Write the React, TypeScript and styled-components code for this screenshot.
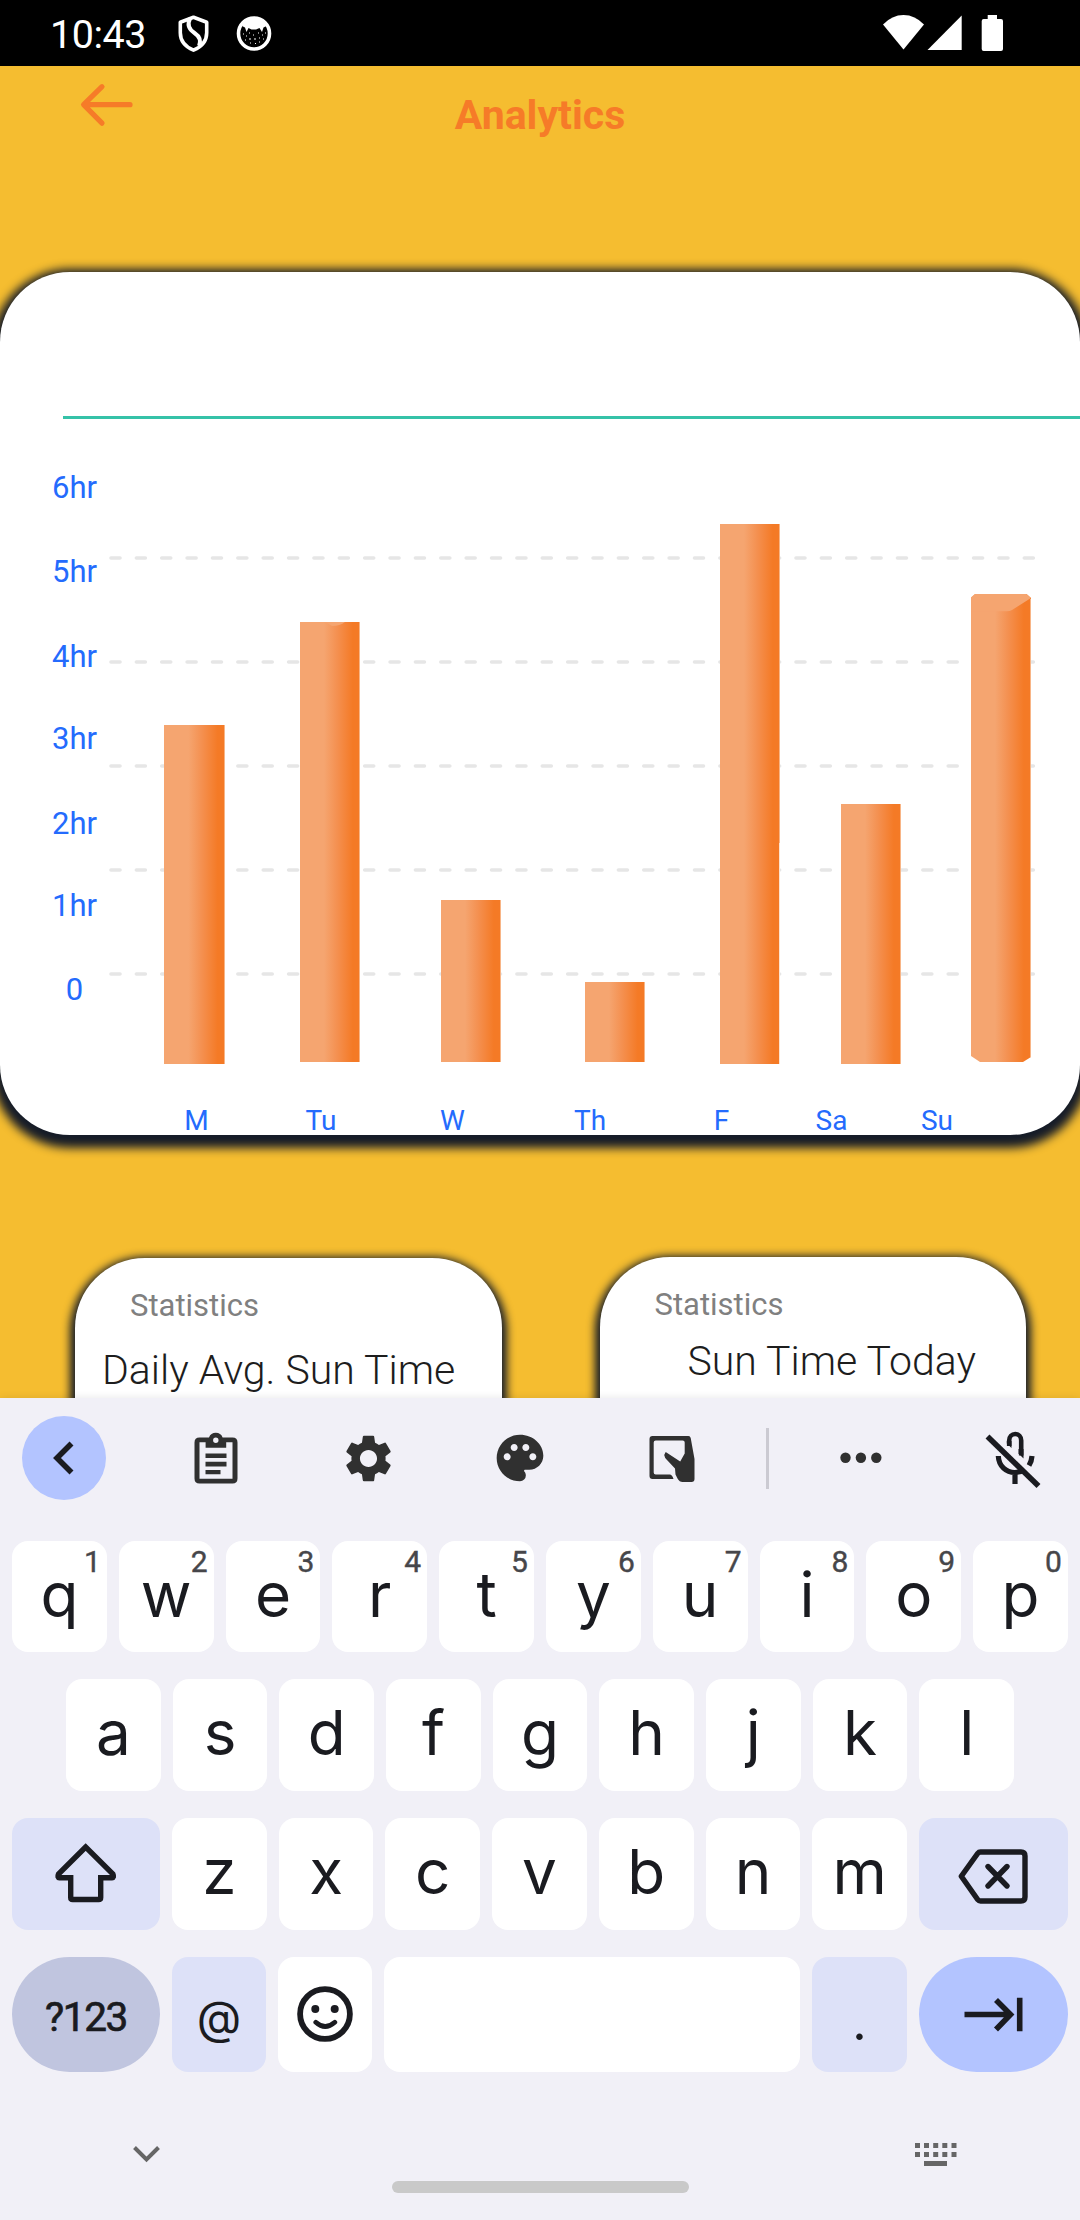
import React from "react";
import styled, { createGlobalStyle } from "styled-components";
import { MdSettings, MdPalette } from "react-icons/md";

const GlobalStyle = createGlobalStyle`
  * { box-sizing: border-box; }
  body { margin: 0; background: #f5bd30; }
`;

const INK = "#1a1b20";
const TOOL = "#303030";

const Screen = styled.div`
  width: 1080px;
  height: 2220px;
  display: flex;
  flex-direction: column;
  overflow: hidden;
  background: #f5bd30;
  font-family: Roboto, "Liberation Sans", sans-serif;
`;

const StatusBar = styled.header`
  height: 66px;
  flex: none;
  background: #000;
  color: #fff;
  display: flex;
  align-items: flex-start;
  padding: 14px 75px 0 50px;
`;

const Clock = styled.span`
  width: 126px;
  padding-top: 1px;
  font-size: 39.5px;
  line-height: 40px;
  letter-spacing: -0.5px;
`;

const StatusIcons = styled.div`
  display: flex;
  flex: 1;
  justify-content: space-between;
`;

const Glyph = styled.svg`
  display: block;
  flex: none;
`;

const Content = styled.main`
  height: 1332px;
  flex: none;
  overflow: hidden;
`;

const TopBar = styled.div`
  height: 206px;
  display: grid;
  grid-template-columns: 200px 1fr 200px;
  align-items: start;
`;

const BackButton = styled.div`
  padding: 14px 0 0 76px;
`;

const Title = styled.h1`
  margin: 0;
  padding-top: 25px;
  text-align: center;
  font-size: 41px;
  line-height: 48px;
  font-weight: 700;
  color: #f67b28;
`;

const shadowColor = "#161c28";

const ChartCard = styled.section`
  height: 863px;
  padding-top: 144px;
  background: #fff;
  border-radius: 70px;
  box-shadow: 0 5px 10px 8px ${shadowColor};
`;

const Rule = styled.div`
  height: 3px;
  margin-left: 63px;
  background: #35c2a8;
`;

const ChartBody = styled.div`
  display: flex;
  height: 651px;
`;

const HourAxis = styled.div`
  width: 104px;
  padding: 49px 0 0 45px;
  flex: none;
`;

const Hour = styled.div<{ $step: number }>`
  width: 59px;
  height: ${(p) => p.$step}px;
  text-align: center;
  font-size: 31px;
  line-height: 40px;
  color: #246bfd;
`;

const Plot = styled(Glyph)`
  margin-top: 81px;
`;

const DayAxis = styled.div`
  display: flex;
  margin: 35px 0 0 136px;
`;

const Day = styled.span<{ $w: number }>`
  width: ${(p) => p.$w}px;
  text-align: center;
  font-size: 28px;
  line-height: 32px;
  color: #246bfd;
`;

const StatRow = styled.div`
  display: flex;
  justify-content: space-between;
  align-items: flex-start;
  padding: 123px 54px 0 75px;
`;

const StatCard = styled.section<{ $lift: number; $pad: number }>`
  width: 426.5px;
  height: 300px;
  margin-top: ${(p) => -p.$lift}px;
  padding: ${(p) => p.$pad}px 0 0 55px;
  background: #fff;
  border-radius: 70px;
  box-shadow: 0 4px 8px 5px ${shadowColor};
`;

const StatLabel = styled.div`
  font-size: 31px;
  line-height: 40px;
  color: #808080;
`;

const StatTitle = styled.div<{ $x: number; $top: number }>`
  margin: ${(p) => p.$top}px 0 0 ${(p) => p.$x}px;
  font-size: 41px;
  line-height: 48px;
  font-weight: 300;
  color: #1d1d1d;
  white-space: nowrap;
`;

const Keyboard = styled.section`
  position: relative;
  flex: 1;
  background: #f1f0f7;
  box-shadow: 0 0 8px rgba(0, 0, 0, 0.1);
  font-family: Inter, "Liberation Sans", sans-serif;
  color: ${INK};
`;

const Toolbar = styled.div`
  height: 143px;
  padding: 18px 0 41px 22px;
  display: flex;
  align-items: center;
`;

const RoundButton = styled.div`
  width: 84px;
  height: 84px;
  margin-right: 34px;
  border-radius: 42px;
  background: #b3c4ff;
  display: flex;
  align-items: center;
  justify-content: center;
`;

const ToolSlot = styled.div<{ $w?: number }>`
  width: ${(p) => p.$w ?? 152}px;
  color: ${TOOL};
  display: flex;
  align-items: center;
  justify-content: center;
`;

const Divider = styled.div`
  width: 3px;
  height: 61px;
  margin: 0 16.4px 0 18px;
  background: #cbcad2;
`;

const KeyRow = styled.div<{ $inset?: number; $h?: number }>`
  display: flex;
  gap: 12px;
  height: ${(p) => p.$h ?? 112}px;
  margin: 0 ${(p) => p.$inset ?? 12}px 27px;
`;

type Tone = "plain" | "soft" | "mode" | "accent";
const tones: Record<Tone, string> = {
  plain: "#ffffff",
  soft: "#dde1f8",
  mode: "#c0c5df",
  accent: "#b3c4ff",
};

const Key = styled.div<{ $tone?: Tone; $w?: number; $round?: boolean }>`
  position: relative;
  flex: ${(p) => (p.$w ? `0 0 ${p.$w}px` : "1 1 0")};
  min-width: 0;
  border-radius: ${(p) => (p.$round ? 58 : 16)}px;
  background: ${(p) => tones[p.$tone ?? "plain"]};
  display: flex;
  align-items: center;
  justify-content: center;
`;

const Letter = styled.span`
  padding-bottom: 4px;
  font-size: 62px;
  line-height: 74px;
`;

const Hint = styled.span`
  position: absolute;
  top: 3px;
  right: 6px;
  font-family: Roboto, "Liberation Sans", sans-serif;
  font-size: 30px;
  line-height: 36px;
  color: #46464a;
  -webkit-text-stroke: 0.4px #46464a;
`;

const KeyText = styled.span<{ $size: number; $top: number }>`
  padding-top: ${(p) => p.$top}px;
  font-size: ${(p) => p.$size}px;
  line-height: 48px;
`;

const ModeText = styled(KeyText)`
  font-family: Roboto, "Liberation Sans", sans-serif;
  letter-spacing: -1.4px;
  -webkit-text-stroke: 0.7px ${INK};
`;

const SystemRow = styled.div`
  height: 148px;
  display: grid;
  grid-template-columns: 1fr 297px 1fr;
  margin-top: -27px;
`;

const NavPill = styled.div`
  height: 12px;
  margin-top: 109px;
  border-radius: 6px;
  background: #c9c9c9;
`;

const NavIcon = styled.div<{ $left: number; $top: number }>`
  padding: ${(p) => p.$top}px 0 0 ${(p) => p.$left}px;
`;

const hours = [
  { label: "6hr", step: 84 },
  { label: "5hr", step: 85 },
  { label: "4hr", step: 82 },
  { label: "3hr", step: 85 },
  { label: "2hr", step: 82 },
  { label: "1hr", step: 84 },
  { label: "0", step: 40 },
];

const days = [
  { label: "M", w: 121 },
  { label: "Tu", w: 128 },
  { label: "W", w: 135 },
  { label: "Th", w: 140 },
  { label: "F", w: 123 },
  { label: "Sa", w: 97 },
  { label: "Su", w: 114 },
];

const bars = [
  { x: 164, w: 61, top: 725, end: 1064 },
  { x: 300, w: 60, top: 622, end: 1062 },
  { x: 441, w: 60, top: 900, end: 1062 },
  { x: 585, w: 60, top: 982, end: 1062 },
  { x: 720, w: 60, top: 524, end: 1064 },
  { x: 841, w: 60, top: 804, end: 1064 },
];

const gridLines = [558, 662, 766, 870, 974];

function ChartPlot() {
  return (
    <Plot width="940" height="570" viewBox="104 500 940 570">
      <defs>
        <linearGradient id="bar" x1="0" x2="1" y1="0" y2="0">
          <stop offset="0" stopColor="#f5a570" />
          <stop offset="0.4" stopColor="#f5a570" />
          <stop offset="0.62" stopColor="#f49050" />
          <stop offset="0.88" stopColor="#f47a26" />
          <stop offset="1" stopColor="#f47a26" />
        </linearGradient>
      </defs>
      {gridLines.map((y) => (
        <line key={y} x1="111" x2="1034.5" y1={y} y2={y} stroke="#e6e6e6" strokeWidth="3.6" strokeLinecap="round" strokeDasharray="9 16.37" />
      ))}
      {bars.map((b) => (
        <g key={b.x}>
          <rect x={b.x} y={b.top} width={b.w} height={b.end - b.top} fill="url(#bar)" />
          <rect x={b.x + b.w - 1} y={b.top} width="1" height={b.end - b.top} fill="#f8b586" />
        </g>
      ))}
      <path d="M325 622h20q-5 4-13 4z" fill="#f5a570" />
      <rect x="779" y="843" width="1" height="221" fill="#fde3d0" />
      <path d="M971 597.5l4-3.500h51.500l4.500 4V1057l-8 5h-43l-9-6z" fill="url(#bar)" />
      <path d="M971 597.500l4-3.500h51.500l4.500 4-19 12q-2 1.300-5 1.300h-36z" fill="#f5a570" />
      <rect x="1030" y="599" width="1" height="458" fill="#f8b586" />
    </Plot>
  );
}

const row1 = ["q", "w", "e", "r", "t", "y", "u", "i", "o", "p"];
const row2 = ["a", "s", "d", "f", "g", "h", "j", "k", "l"];
const row3 = ["z", "x", "c", "v", "b", "n", "m"];

export default function App() {
  return (
    <Screen>
      <GlobalStyle />
      <StatusBar>
        <Clock>10:43</Clock>
        <StatusIcons>
          <Glyph width="100" height="40" viewBox="176 14 100 40" fill="none" stroke="#fff">
            <path d="M193.500 17.200l13.200 5v10.500c0 7.500-5 14-13.200 17.500-8.200-3.500-13.200-10-13.200-17.500V22.200z" strokeWidth="3.600" strokeLinejoin="round" />
            <path d="M190 18.500c-3 6-1.500 10.500 4.500 14.500 5.500 3.700 7 7.500 4.500 13" strokeWidth="4" />
            <circle cx="254" cy="33.500" r="15.500" strokeWidth="3.600" />
            <path d="M242 26C245 20 249 17.500 254 17.500S263 20 266.500 26L263.500 27.500 262 32 259.500 28 256 29.500h-4.500L248.500 28 246.500 32 245 27.500z" fill="#fff" stroke="none" />
            <path d="M243 34h1M246 36h1M249 33h1M253 35h1M258 33h1M262 35h1M265 33h1M245 40h1M249 39h2M254 39h2M259 38h1M263 39h1M250 43h1M255 43.500h1M259 42h1" strokeWidth="1.200" />
          </Glyph>
          <Glyph width="125" height="40" viewBox="880 14 125 40" fill="#fff">
            <path d="M903.500 49.500L883 24.500Q892 15 903.500 15T924 24.500z" />
            <path d="M961.700 15.500V50H927.500z" />
            <path d="M987.700 15h9.300v4h4q2 0 2 2v28q0 2-2 2h-17.300q-2 0-2-2V21q0-2 2-2h4z" />
          </Glyph>
        </StatusIcons>
      </StatusBar>

      <Content>
        <TopBar>
          <BackButton>
            <Glyph width="60" height="50" viewBox="76 80 60 50" fill="none" stroke="#f67b28" strokeWidth="5.200" strokeLinecap="round" strokeLinejoin="round">
              <path d="M130 104.700H84M102 86.700L83.600 104.700 102 123.200" />
            </Glyph>
          </BackButton>
          <Title>Analytics</Title>
        </TopBar>

        <ChartCard>
          <Rule />
          <ChartBody>
            <HourAxis>
              {hours.map((h) => (
                <Hour key={h.label} $step={h.step}>{h.label}</Hour>
              ))}
            </HourAxis>
            <ChartPlot />
          </ChartBody>
          <DayAxis>
            {days.map((d) => (
              <Day key={d.label} $w={d.w}>{d.label}</Day>
            ))}
          </DayAxis>
        </ChartCard>

        <StatRow>
          <StatCard $lift={0} $pad={28}>
            <StatLabel>Statistics</StatLabel>
            <StatTitle $x={-28} $top={20}>Daily Avg. Sun Time</StatTitle>
          </StatCard>
          <StatCard $lift={1} $pad={28}>
            <StatLabel>Statistics</StatLabel>
            <StatTitle $x={33} $top={12}>Sun Time Today</StatTitle>
          </StatCard>
        </StatRow>
      </Content>

      <Keyboard>
        <Toolbar>
          <RoundButton>
            <Glyph width="84" height="84" viewBox="22 1416 84 84" fill="none" stroke={INK} strokeWidth="5.600">
              <path d="M71.500 1443.500L57 1458l14.500 14.500" />
            </Glyph>
          </RoundButton>
          <ToolSlot>
            <Glyph width="60" height="60" viewBox="186.500 1428.500 60 60">
              <path fillRule="evenodd" fill={TOOL} d="M200 1438h9.500a7.300 7.300 0 0 1 13.600 0h9.900q5 0 5 5v36q0 5-5 5h-33q-5 0-5-5v-36q0-5 5-5zM200 1442.700v36.600h33v-36.600h-6.300v5.600h-20.600v-5.600zM216.300 1438a2.700 2.700 0 1 0 .01 5.400 2.700 2.700 0 0 0-.01-5.400z" />
              <path fill={TOOL} d="M206 1454h21v4.600h-21zM206 1462.300h21v4.600h-21zM206 1470.500h15v4.300h-15z" />
            </Glyph>
          </ToolSlot>
          <ToolSlot><MdSettings size={57} /></ToolSlot>
          <ToolSlot><MdPalette size={56} /></ToolSlot>
          <ToolSlot>
            <Glyph width="60" height="60" viewBox="642.500 1428 60 60" fill={TOOL}>
              <path fillRule="evenodd" d="M653 1436h36q1.800 0 2.200 2l3.800 21v20q0 3-3 3h-9q-3 0-5-3.500l-2-4-.5-6-8-8.500q-2.500-2.500-2.800-5l1.500-3 14.500 9.500 4.500-8v-11q0-2-2-2h-27q-2 0-2 2v30q0 2 2 2h14q2.500 0 3.800 4.500H653q-3 0-3-3v-37q0-3 3-3z" />
            </Glyph>
          </ToolSlot>
          <Divider />
          <ToolSlot>
            <Glyph width="60" height="20" viewBox="831.500 1449 60 20" fill={TOOL}>
              <circle cx="846" cy="1458.700" r="5.200" />
              <circle cx="861.400" cy="1458.700" r="5.200" />
              <circle cx="876.800" cy="1458.700" r="5.200" />
            </Glyph>
          </ToolSlot>
          <ToolSlot $w={142}>
            <Glyph width="60" height="64" viewBox="979 1426 60 64" overflow="visible" fill="none" stroke={INK} strokeWidth="5.200">
              <path d="M988.500 1436.500L1039.500 1486" strokeWidth="5.600" />
              <path d="M1010.200 1446v-5.500a6 6.500 0 0 1 12 0v15" strokeWidth="4.600" />
              <path d="M1007.800 1441v2.500l4.700 4.500v-7z" fill={INK} stroke="none" />
              <path d="M1024.500 1449v9.500l-5-5V1449z" fill={INK} stroke="none" />
              <path d="M999.300 1456c.5 10.500 8 16.500 16.500 16.500 3.500 0 6.500-.8 9-2.500M1016 1472v12" />
              <path d="M1033 1456q-.3 5-3 9.500" />
            </Glyph>
          </ToolSlot>
        </Toolbar>

        <KeyRow $h={111}>
          {row1.map((k, i) => (
            <Key key={k}>
              <Letter>{k}</Letter>
              <Hint>{(i + 1) % 10}</Hint>
            </Key>
          ))}
        </KeyRow>
        <KeyRow $inset={66}>
          {row2.map((k) => (
            <Key key={k}><Letter>{k}</Letter></Key>
          ))}
        </KeyRow>
        <KeyRow>
          <Key $tone="soft" $w={148}>
            <Glyph width="70" height="70" viewBox="51 1839 70 70" fill="none" stroke={INK} strokeWidth="5.400" strokeLinejoin="round">
              <path d="M85.700 1847L58.500 1874q-1.500 3.500 1 3.700h11.200v19.800q0 2 2 2h26q2 0 2-2v-19.800h11.200q2.500-.2 1-3.700z" strokeLinejoin="miter" />
            </Glyph>
          </Key>
          {row3.map((k) => (
            <Key key={k}><Letter>{k}</Letter></Key>
          ))}
          <Key $tone="soft" $w={149}>
            <Glyph width="80" height="64" viewBox="953.500 1842 80 64" fill="none" stroke={INK} strokeWidth="5.400" strokeLinejoin="round" strokeLinecap="round">
              <path d="M960.800 1876.300l16.500-23q1-1.300 2.700-1.300h40.500q4 0 4 4v41q0 4-4 4H980q-1.700 0-2.700-1.300z" />
              <path d="M987.500 1866.500l19 19.500M1006.500 1866.500l-19 19.500" />
            </Glyph>
          </Key>
        </KeyRow>
        <KeyRow $h={115}>
          <Key $tone="mode" $w={148} $round>
            <ModeText $size={40.5} $top={5}>?123</ModeText>
          </Key>
          <Key $tone="soft" $w={94}>
            <KeyText $size={46} $top={5}>@</KeyText>
          </Key>
          <Key $w={94}>
            <Glyph width="60" height="60" viewBox="294.700 1984.700 60 60" fill="none" stroke={INK}>
              <circle cx="324.700" cy="2013.700" r="24.900" strokeWidth="5.800" />
              <circle cx="315" cy="2008.800" r="4" fill={INK} stroke="none" />
              <circle cx="334.400" cy="2008.800" r="4" fill={INK} stroke="none" />
              <path d="M315.500 2022q9.300 8.500 19 0" strokeWidth="4.800" strokeLinecap="round" />
            </Glyph>
          </Key>
          <Key />
          <Key $tone="soft" $w={95}>
            <KeyText $size={50} $top={15}>.</KeyText>
          </Key>
          <Key $tone="accent" $w={149} $round>
            <Glyph width="64" height="40" viewBox="961.500 1994.500 64 40" fill="none" stroke={INK} strokeWidth="5.600">
              <path d="M964 2014h46M995.500 1999.500L1010 2014l-14.500 15M1019.200 1997.300v33.400" />
            </Glyph>
          </Key>
        </KeyRow>

        <SystemRow>
          <NavIcon $left={130} $top={70}>
            <Glyph width="34" height="24" viewBox="130 2142 34 24" fill="none" stroke="#666" strokeWidth="4">
              <path d="M134.500 2147.500l12 12 12-12" />
            </Glyph>
          </NavIcon>
          <NavPill />
          <NavIcon $left={224} $top={70}>
            <Glyph width="48" height="28" viewBox="912 2142 48 28" fill="#666">
              {[914, 923, 932.2, 941.3, 950.5].map((x) => (
                <React.Fragment key={x}>
                  <rect x={x} y="2143" width="5" height="5" />
                  <rect x={x} y="2152" width="5" height="5" />
                </React.Fragment>
              ))}
              <rect x="923" y="2161" width="23" height="5" />
            </Glyph>
          </NavIcon>
        </SystemRow>
      </Keyboard>
    </Screen>
  );
}
